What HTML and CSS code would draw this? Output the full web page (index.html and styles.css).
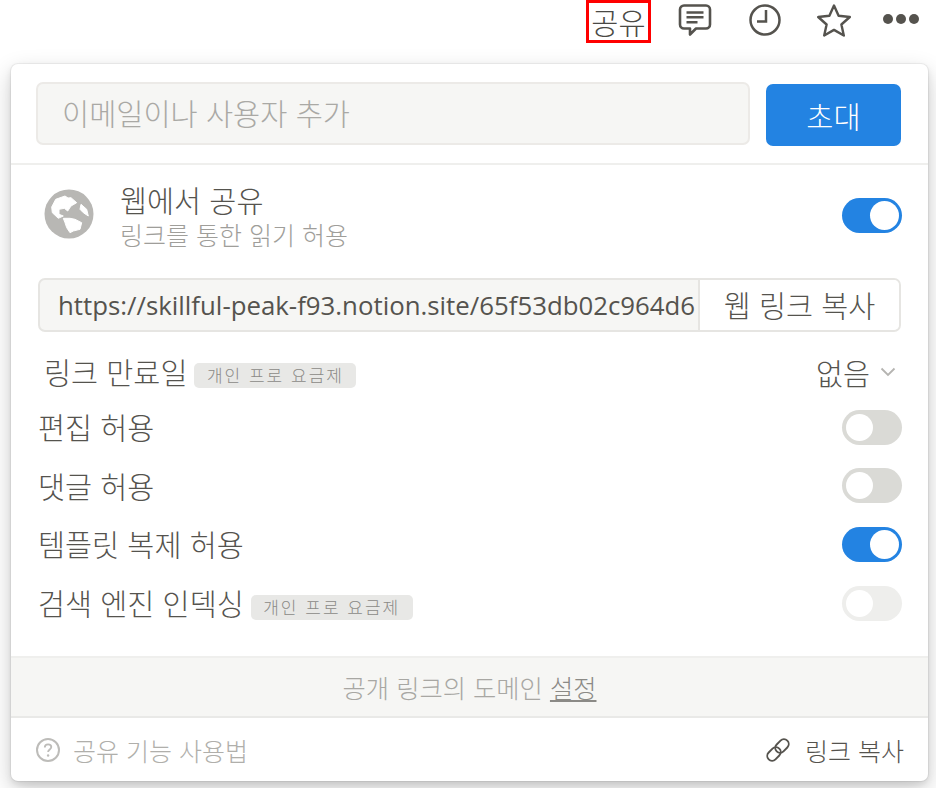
FILE: index.html
```
<!DOCTYPE html>
<html lang="ko">
<head>
<meta charset="utf-8">
<title>공유</title>
<link rel="stylesheet" href="styles.css">
</head>
<body>
<header class="topbar">
  <span class="share-tab">공유</span>
  <svg class="top-icon comment" viewBox="0 0 36 34" width="36" height="34"><path d="M7 2.500h22a4 4 0 0 1 4 4v15a4 4 0 0 1-4 4H19l-6 6v-6H7a4 4 0 0 1-4-4v-15a4 4 0 0 1 4-4z" fill="none" stroke="#55534e" stroke-width="2.600" stroke-linejoin="round"/><path d="M9.500 9.500h17M9.500 14.300h17M9.500 19.200h11" stroke="#55534e" stroke-width="2.400" fill="none"/></svg>
  <svg class="top-icon clock" viewBox="0 0 34 34" width="34" height="34"><circle cx="17" cy="17" r="14.500" fill="none" stroke="#55534e" stroke-width="2.500"/><path d="M18 7v11.500H9" fill="none" stroke="#55534e" stroke-width="2.500"/></svg>
  <svg class="top-icon star" viewBox="0 0 36 34" width="36" height="34"><path d="M18 2.500l4.600 10.300 11.200 1.200-8.400 7.500 2.400 11-9.800-5.600-9.800 5.600 2.400-11-8.400-7.500 11.200-1.200z" fill="none" stroke="#55534e" stroke-width="2.400" stroke-linejoin="round"/></svg>
  <span class="dots"><i></i><i></i><i></i></span>
</header>
<main class="panel">
  <section class="invite">
    <div class="invite-input">이메일이나 사용자 추가</div>
    <button class="invite-btn">초대</button>
  </section>
  <section class="body">
    <div class="web-row">
      <svg class="globe" viewBox="0 0 50 50" width="50" height="50"><circle cx="25" cy="25" r="24.500" fill="#b8b7b4"/><path d="M11.700 10.300L21 7l3 2 3-.3 5.700 5-5.700 3.300-3.300 5-3.400-2.700-5.300 1v5l4.300 1.700-5 2.300-6-5.600-.6-5.700zM19.300 29.300H26l5 1 6.700 3.400-1.700 6.600-6.700 1.700-3.300 1.700-3.300-5-1.700-5zM37 15.300l5.700 5 1.600 6.700-5-3.300-3.300-3.400z" fill="#fff" stroke="#fff" stroke-linejoin="round"/></svg>
      <div class="web-text">
        <div class="web-title">웹에서 공유</div>
        <div class="web-sub">링크를 통한 읽기 허용</div>
      </div>
      <span class="switch on"><i></i></span>
    </div>
    <div class="url-box">
      <span class="url">https://skillful-peak-f93.notion.site/65f53db02c964d6</span>
      <span class="copy-web">웹 링크 복사</span>
    </div>
    <div class="opt expire">
      <span class="opt-label">링크 만료일</span><span class="tag">개인 프로 요금제</span>
      <span class="none">없음<svg viewBox="0 0 16 10" width="16" height="10"><path d="M1.500 1.500L8 8l6.500-6.500" fill="none" stroke="#b5b4b1" stroke-width="1.800"/></svg></span>
    </div>
    <div class="opt"><span class="opt-label">편집 허용</span><span class="switch"><i></i></span></div>
    <div class="opt"><span class="opt-label">댓글 허용</span><span class="switch"><i></i></span></div>
    <div class="opt"><span class="opt-label">템플릿 복제 허용</span><span class="switch on"><i></i></span></div>
    <div class="opt"><span class="opt-label">검색 엔진 인덱싱</span><span class="tag">개인 프로 요금제</span><span class="switch off"><i></i></span></div>
  </section>
  <section class="domain">공개 링크의 도메인 <u>설정</u></section>
  <footer class="foot">
    <span class="help"><svg viewBox="0 0 26 26" width="26" height="26"><circle cx="13" cy="13" r="11" fill="none" stroke="#bdbcb9" stroke-width="2"/><path d="M9.800 10.500c0-2 1.400-3.200 3.300-3.200s3.200 1.200 3.200 2.800c0 2.400-3.200 2.500-3.200 5" fill="none" stroke="#bdbcb9" stroke-width="1.800"/><circle cx="13.100" cy="18.500" r="1.200" fill="#bdbcb9"/></svg>공유 기능 사용법</span>
    <span class="copy-link"><svg viewBox="0 0 26 26" width="26" height="26"><g fill="none" stroke="#55534e" stroke-width="1.900"><rect x="12.200" y="1.500" width="9.600" height="15" rx="4.800" transform="rotate(45 17 9)"/><rect x="4.200" y="9.500" width="9.600" height="15" rx="4.800" transform="rotate(45 9 17)"/></g></svg>링크 복사</span>
  </footer>
</main>
</body>
</html>
```
FILE: styles.css
```
* { box-sizing: border-box; }
html, body { margin: 0; height: 100%; }
body {
  width: 936px;
  height: 788px;
  overflow: hidden;
  background: #fff;
  font-family: "Noto Sans CJK KR", "Noto Sans", sans-serif;
  font-weight: 300;
  color: #55534e;
}
.topbar {
  height: 64px;
  display: flex;
  align-items: flex-start;
  padding-left: 586px;
}
.share-tab {
  width: 65px;
  height: 43px;
  border: 3px solid #f00;
  font-size: 29.500px;
  line-height: 37px;
  text-align: center;
  color: #4a4945;
}
.top-icon { flex: none; margin-top: 3px; }
.comment { margin-left: 26px; }
.clock { margin-left: 35px; }
.star { margin-left: 34px; }
.dots { display: flex; gap: 3px; margin: 14px 0 0 31px; }
.dots i { width: 10px; height: 10px; border-radius: 50%; background: #55534e; }
.panel {
  margin-left: 11px;
  width: 917px;
  height: 717px;
  border-radius: 7px;
  background: #fff;
  box-shadow: 0 0 0 1px rgba(15,15,15,.05), 0 3px 6px rgba(15,15,15,.1), 0 9px 24px rgba(15,15,15,.2);
  display: flex;
  flex-direction: column;
  overflow: hidden;
}
.invite {
  height: 101px;
  flex: none;
  display: flex;
  gap: 16px;
  padding: 18px 27px 0 25px;
  border-bottom: 2px solid #efefed;
}
.invite-input {
  width: 714px;
  height: 63px;
  border: 2px solid #eceae7;
  border-radius: 7px;
  background: #f6f6f4;
  padding-left: 24px;
  font-size: 29.500px;
  line-height: 57px;
  color: #aaa9a5;
}
.invite-btn {
  width: 135px;
  height: 62px;
  margin-top: 2px;
  border: 0;
  border-radius: 7px;
  background: #2383e2;
  color: #fff;
  font: 300 29.500px "Noto Sans CJK KR", sans-serif;
}
.body { flex: 1; padding: 0 26px 0 27px; }
.web-row { height: 113px; display: flex; align-items: flex-start; padding-top: 22px; }
.globe { flex: none; margin: 2px 0 0 6px; }
.web-text { flex: 1; margin-left: 26px; }
.web-title { font-size: 29.400px; line-height: 38px; margin-top: -7px; }
.web-sub { font-size: 25px; line-height: 32px; color: #9f9e9a; }
.switch {
  flex: none;
  width: 60px;
  height: 35px;
  border-radius: 18px;
  background: #dadad6;
  padding: 4px;
  display: block;
}
.switch i { display: block; width: 27px; height: 27px; border-radius: 50%; background: #fff; }
.switch.on { background: #2383e2; padding: 3px 0 0 28px; }
.switch.on i { width: 29px; height: 29px; }
.switch.off { background: #eeeeec; }
.web-row .switch { margin-top: 11px; }
.url-box {
  height: 54px;
  margin-right: 1px;
  display: flex;
  border: 2px solid #e6e5e2;
  border-radius: 7px;
  background: #f6f6f4;
  overflow: hidden;
}
.url {
  flex: 1;
  min-width: 0;
  padding-left: 18px;
  font-family: "Open Sans", sans-serif;
  font-weight: 400;
  font-size: 25.800px;
  line-height: 51px;
  white-space: nowrap;
  overflow: hidden;
}
.copy-web {
  flex: none;
  width: 201px;
  background: #fff;
  border-left: 2px solid #e6e5e2;
  text-align: center;
  font-size: 29.400px;
  line-height: 48px;
}
.opt {
  height: 58.600px;
  display: flex;
  align-items: center;
}
.opt-label { font-size: 29.400px; margin-bottom: 2px; }
.opt .switch { margin-left: auto; }
.expire { margin: 10px 0 -3px 6px; height: 59px; }
.tag {
  margin: 8px 0 0 7px;
  width: 162px;
  height: 25px;
  border-radius: 5px;
  background: #e8e8e6;
  color: #8b8a86;
  font-size: 17px;
  line-height: 24px;
  text-align: center;
  letter-spacing: 2px;
}
.none { margin-left: auto; display: flex; align-items: center; gap: 10px; font-size: 29.400px; padding-right: 6px; }
.domain {
  flex: none;
  height: 62px;
  border-top: 2px solid #efefed;
  border-bottom: 2px solid #e9e9e7;
  background: #f6f6f4;
  text-align: center;
  font-size: 25.300px;
  line-height: 58px;
  color: #a8a7a3;
}
.domain u { color: #8b8a86; }
.foot {
  flex: none;
  height: 63px;
  display: flex;
  justify-content: space-between;
  align-items: center;
  padding: 0 24px;
  font-size: 25px;
}
.help { display: flex; align-items: center; gap: 12px; color: #b0afab; }
.copy-link { display: flex; align-items: center; gap: 14px; }
```
